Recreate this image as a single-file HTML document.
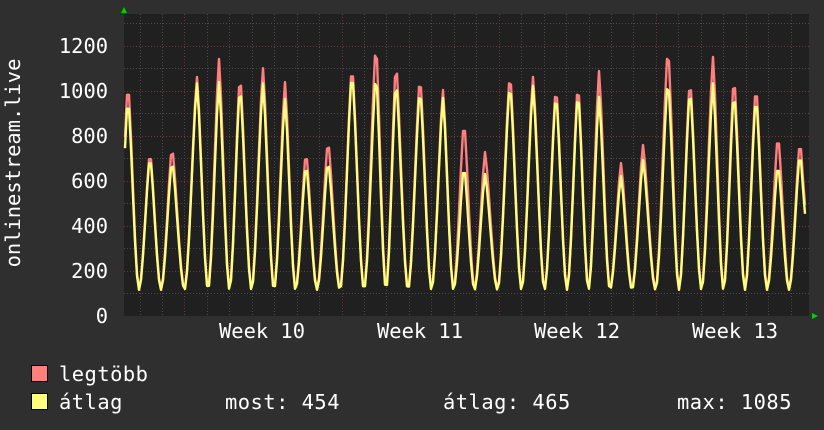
<!DOCTYPE html>
<html><head><meta charset="utf-8">
<style>
html,body{margin:0;padding:0;background:#2f2f2f;width:824px;height:430px;overflow:hidden}
svg{display:block}
text{font-family:"DejaVu Sans Mono","Liberation Mono",monospace;font-size:20.4px;fill:#fff}
.lg{letter-spacing:0.5px}
</style></head><body>
<svg id="s" width="824" height="430" xmlns="http://www.w3.org/2000/svg">
<rect x="124" y="14" width="685" height="302" fill="#202020"/>
<g id="grid"></g>
<g id="data"></g>
<polygon points="121,13 127,13 124,7" fill="#00d000"/>
<polygon points="812,313 812,319 818,316" fill="#00d000"/>
<g text-anchor="end">
<text x="108" y="53">1200</text>
<text x="108" y="98">1000</text>
<text x="108" y="143">800</text>
<text x="108" y="188">600</text>
<text x="108" y="233">400</text>
<text x="108" y="278">200</text>
<text x="108" y="323">0</text>
</g>
<text transform="translate(20,163) rotate(-90)" text-anchor="middle">onlinestream.live</text>
<g text-anchor="middle">
<text x="262" y="338">Week 10</text>
<text x="420" y="338">Week 11</text>
<text x="577" y="338">Week 12</text>
<text x="735" y="338">Week 13</text>
</g>
<rect x="31.5" y="365.5" width="16" height="16" fill="#ff7f7f" stroke="#000"/>
<rect x="31.5" y="393.5" width="16" height="16" fill="#ffff7f" stroke="#000"/>
<text class="lg" x="59" y="381">legtöbb</text>
<text class="lg" x="59" y="409">átlag</text>
<text class="lg" x="225" y="409">most: 454</text>
<text class="lg" x="443" y="409">átlag: 465</text>
<text class="lg" x="677" y="409">max: 1085</text>
</svg>
<script>
var ns="http://www.w3.org/2000/svg";
var g=document.getElementById("grid"),d=document.getElementById("data");
function ln(x1,y1,x2,y2,c){var l=document.createElementNS(ns,"line");l.setAttribute("x1",x1);l.setAttribute("y1",y1);l.setAttribute("x2",x2);l.setAttribute("y2",y2);l.setAttribute("stroke",c);l.setAttribute("stroke-dasharray","1,2");g.appendChild(l);}
for(var v=100;v<=1300;v+=100){var y=315.5-v*0.225;y=Math.round(y)+0.5;ln(124,y,809,y,v%200==0?"#6a3a3a":"#4a4a4a");}
for(var x=139.5;x<809;x+=22.45){var xx=Math.round(x)+0.5;var red=[184,341,499,657].some(function(r){return Math.abs(r-xx)<3});ln(xx,14,xx,316,red?"#6a3a3a":"#4a4a4a");}
var pk=[[128,1035,970],[150,730,710],[172,750,690],[197,1058,1030],[219,1138,1035],[240,1075,1025],[263,1097,1030],[285,1035,960],[306,730,675],[328,780,690],[352,1115,1085],[376,1213,1080],[396,1128,1050],[420,1067,1013],[443,1000,965],[464,867,667],[485,724,627],[510,1080,1035],[533,1058,1018],[556,1022,991],[578,1035,1000],[599,1084,970],[621,675,618],[643,755,690],[668,1195,1053],[690,1053,1013],[713,1147,1030],[734,1067,1000],[756,1027,978],[778,804,675],[800,778,724],[822,700,650]];
function val(x,idx){
 var i=0;while(i<pk.length-1&&pk[i+1][0]<=x)i++;
 var a=pk[i],b=pk[Math.min(i+1,pk.length-1)];
 var mn=idx==1?118:112;
 var t;
 if(x<a[0]){t=(a[0]-x)/11;return mn+(a[idx]-mn)*f(Math.min(t,1));}
 var mid=(a[0]+b[0])/2;
 if(x<=mid){t=(x-a[0])/(mid-a[0]);return mn+(a[idx]-mn)*f(t);}
 t=(b[0]-x)/(b[0]-mid);return mn+(b[idx]-mn)*f(t);
}
function f(t){var c=(1+Math.cos(Math.PI*t))/2;return c*(1-0.15*Math.sin(Math.PI*t));}
function path(idx,col){
 var s="";
 for(var x=125;x<=806;x+=2){var v=val(x,idx);if(x>=804)v=idx==1?490:450;var y=315-v*0.225;s+=(s?"L":"M")+x+","+y.toFixed(1);}
 var p=document.createElementNS(ns,"path");p.setAttribute("d",s);p.setAttribute("fill","none");p.setAttribute("stroke",col);p.setAttribute("stroke-width","2.4");p.setAttribute("stroke-linejoin","round");d.appendChild(p);
}
path(1,"#ff7f7f");path(2,"#ffff7f");
</script>
</body></html>
